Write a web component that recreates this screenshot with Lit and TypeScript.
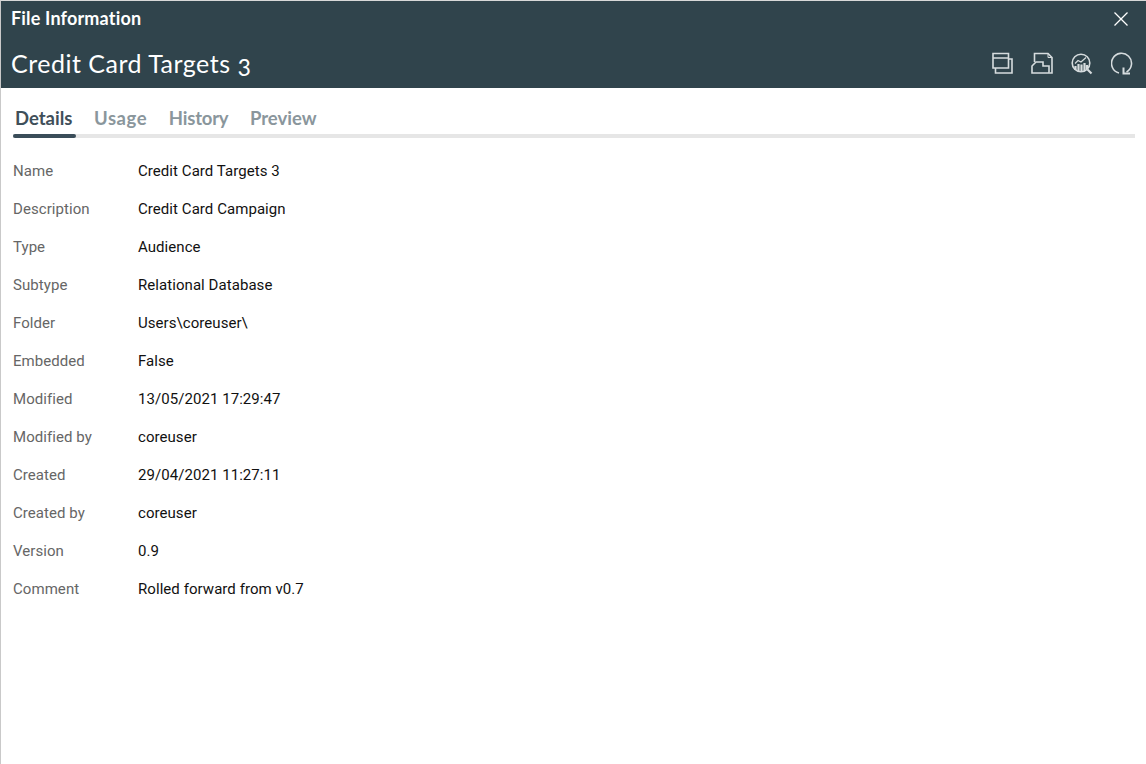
import { LitElement, html, css } from "lit";
import { customElement } from "lit/decorators.js";

const rows: [string, string][] = [
  ["Name", "Credit Card Targets 3"],
  ["Description", "Credit Card Campaign"],
  ["Type", "Audience"],
  ["Subtype", "Relational Database"],
  ["Folder", "Users\\coreuser\\"],
  ["Embedded", "False"],
  ["Modified", "13/05/2021 17:29:47"],
  ["Modified by", "coreuser"],
  ["Created", "29/04/2021 11:27:11"],
  ["Created by", "coreuser"],
  ["Version", "0.9"],
  ["Comment", "Rolled forward from v0.7"],
];

@customElement("app-root")
export class AppRoot extends LitElement {
  static styles = css`
    :host { display: block; }
    .dialog {
      box-sizing: border-box; height: 764px; width: 1146px; background: #fff;
      border-left: 1px solid #c9c9c9; border-top: 1px solid #d8d8d8;
      display: flex; flex-direction: column;
      font-family: Roboto, sans-serif;
    }
    .head { background: #30444c; height: 87px; box-sizing: border-box; color: #fff; padding: 0 14px 0 10px; font-family: Lato, sans-serif; display: flex; flex-direction: column; }
    .top { display: flex; align-items: center; justify-content: space-between; height: 36px; }
    .t1 { font-size: 18px; font-weight: 700; letter-spacing: 0.17px; padding-bottom: 2px; }
    .close { width: 14px; height: 14px; display: block; margin-right: 4px; margin-bottom: 1px; }
    .bottom { display: flex; align-items: center; justify-content: space-between; height: 51px; }
    .t2 { font-size: 25px; font-weight: 400; letter-spacing: 0.5px; font-variant-numeric: oldstyle-nums; }
    .icons { display: flex; gap: 18px; margin-top: 1px; margin-right: -1px; }
    .icons svg { width: 22px; height: 24px; display: block; fill: none; stroke: #d6dcde; stroke-width: 1.6; }
    .tabs { margin: 17px 11px 0 12px; display: flex; gap: 21.5px; padding-left: 2px; border-bottom: 4px solid #e6e6e6; height: 29px; box-sizing: content-box; font-family: Lato, sans-serif; font-size: 18.5px; font-weight: 700; color: #8a969c; }
    .tab { position: relative; line-height: 27px; }
    .tab.on { color: #3f4f5a; }
    .tab.on::after { content: ""; position: absolute; left: -2px; right: -4px; bottom: -4px; height: 4px; border-radius: 2px; background: #3a4d59; }
    .tab.wide { letter-spacing: 0.6px; }
    .tab.tight { letter-spacing: -0.2px; }
    .list { margin: 14px 0 0 12px; display: grid; grid-template-columns: 125px 1fr; grid-auto-rows: 38px; align-items: center; font-size: 15px; letter-spacing: 0.06px; }
    .k { color: #666; }
    .v { color: #111; }
  `;

  render() {
    return html`<div class="dialog">
      <div class="head">
        <div class="top">
          <div class="t1">File Information</div>
          <svg class="close" viewBox="0 0 14 14" fill="none" stroke="#fff" stroke-width="1.3"><path d="M.5.5l13 13M13.500.5l-13 13"/></svg>
        </div>
        <div class="bottom">
          <div class="t2">Credit Card Targets 3</div>
          <div class="icons">
            <svg viewBox="0 0 22 24"><path d="M2 2.500h15.500v14.500H2zM2 7h15.500"/><path d="M17.500 8H21v14H4.500v-5"/></svg>
            <svg viewBox="0 0 22 24"><path d="M3.500 11V2.500H17L21 6.500V22H18.500"/><path d="M17 2.500V6.500H21" stroke-width="1"/><path d="M1 22V15L5 11H12V15H18V22Z"/></svg>
            <svg viewBox="0 0 22 24"><circle cx="10" cy="12" r="8.800"/><path d="M16.500 18.500l4 4" stroke-width="2.200"/><path d="M4 12.500l3-3 3 1.500 5-4.500" stroke-width="1.200"/><path d="M4.500 19v-4M7.500 20v-7M10.500 20.500v-7M13.500 20v-8M16 18v-4" stroke-width="2.200"/></svg>
            <svg viewBox="0 0 22 24"><path d="M8 22A10 10 0 1 1 15.500 21"/><path d="M12.500 16.500V22.500H19" stroke-width="2"/></svg>
          </div>
        </div>
      </div>
      <div class="tabs">
        <div class="tab on">Details</div><div class="tab wide">Usage</div><div class="tab tight">History</div><div class="tab">Preview</div>
      </div>
      <div class="list">
        ${rows.map(([k, v]) => html`<div class="k">${k}</div><div class="v">${v}</div>`)}
      </div>
    </div>`;
  }
}
